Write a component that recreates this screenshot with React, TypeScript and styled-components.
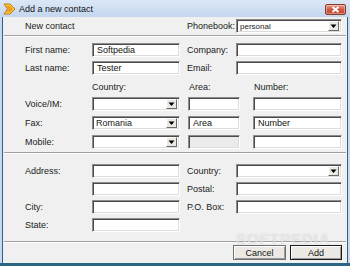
import React from 'react';
import styled, {createGlobalStyle} from 'styled-components';

const GlobalStyle = createGlobalStyle`
  * {
    box-sizing: border-box;
  }
  html, body {
    margin: 0;
    padding: 0;
    background: #ffffff;
  }
  body {
    font-family: 'Liberation Sans', Arial, sans-serif;
    font-size: 9px;
    color: #1a1a1a;
  }
`;

const Window = styled.div`
  position: relative;
  width: 350px;
  height: 266px;
  display: flex;
  flex-direction: column;
  padding: 0 2px;
  background: #c6d9f0;
  border-bottom: 3px solid #2c6484;
  overflow: hidden;
`;

const TitleBar = styled.div`
  height: 17px;
  flex: none;
  display: flex;
  align-items: center;
  gap: 3px;
  padding-left: 1px;
  margin: 0 -2px;
  padding-left: 3px;
  padding-right: 4px;
  background: linear-gradient(#dbe7f6, #c4d7ef);
`;

const Title = styled.span`
  flex: 1;
  font-size: 9px;
  color: #111;
  padding-top: 1px;
`;

const CloseButton = styled.div`
  width: 21px;
  height: 11px;
  margin-top: 1px;
  display: flex;
  align-items: center;
  justify-content: center;
  border: 1px solid #8a3a2c;
  border-radius: 2px;
  background: linear-gradient(#e9a08c, #cf5a42 50%, #c24a33);
  box-shadow: inset 0 0 0 1px rgba(255, 255, 255, 0.35);
`;

const Client = styled.div`
  flex: 1;
  display: flex;
  flex-direction: column;
  background: #f0f0f0;
  border-left: 1px solid #2c6484;
  border-right: 1px solid #2c6484;
  padding: 0 1px;
`;

const Section = styled.div<{$top: number}>`
  padding: ${p => p.$top}px 4px 0 21px;
`;

const FieldGrid = styled.div`
  display: grid;
  grid-template-columns: 67px 88px 56px 106px;
  grid-auto-rows: 14px;
  row-gap: 4px;
  align-items: center;
`;

const PhoneGrid = styled.div`
  display: grid;
  grid-template-columns: 67px 88px 8px 52px 13px 89px;
  grid-template-rows: 10px 14px 14px 14px;
  row-gap: 5px;
  align-items: center;
`;

const Separator = styled.div<{$top: number}>`
  margin-top: ${p => p.$top}px;
  height: 2px;
  border-top: 1px solid #a0a0a0;
  border-bottom: 1px solid #ffffff;
`;

const Label = styled.span<{$col?: number; $span?: number}>`
  grid-column: ${p => (p.$col ? `${p.$col} / span ${p.$span || 1}` : 'auto')};
  white-space: nowrap;
  padding-left: ${p => (p.$col === 3 ? 7 : 0)}px;
  line-height: 10px;
`;

const HeadLabel = styled.span<{$col: number}>`
  grid-column: ${p => p.$col};
  padding-left: ${p => (p.$col === 2 ? 0 : 1)}px;
  line-height: 10px;
`;

const sunken = `
  background: #ffffff;
  border-top: 1px solid #8c8c8c;
  border-left: 1px solid #8c8c8c;
  border-right: 1px solid #ffffff;
  border-bottom: 1px solid #ffffff;
  box-shadow: inset 1px 1px 0 #4a4a4a, inset -1px -1px 0 #dcdcdc;
`;

const TextBox = styled.div<{$col?: number; $disabled?: boolean}>`
  grid-column: ${p => p.$col || 'auto'};
  height: 14px;
  display: flex;
  align-items: center;
  padding-left: 4px;
  font-size: 9px;
  color: #111;
  ${sunken}
  background: ${p => (p.$disabled ? '#ebebeb' : '#ffffff')};
`;

const Combo = styled.div<{$col?: number; $small?: boolean}>`
  grid-column: ${p => p.$col || 'auto'};
  height: 14px;
  display: flex;
  align-items: center;
  padding: 2px 2px 2px 2px;
  font-size: ${p => (p.$small ? 8 : 9)}px;
  ${sunken}
`;

const ComboText = styled.span`
  flex: 1;
  padding-left: 1px;
  overflow: hidden;
  white-space: nowrap;
`;

const DropButton = styled.div`
  width: 11px;
  height: 10px;
  display: flex;
  align-items: center;
  justify-content: center;
  background: #ece9e4;
  border-top: 1px solid #ffffff;
  border-left: 1px solid #ffffff;
  border-right: 1px solid #6a6a6a;
  border-bottom: 1px solid #6a6a6a;
`;

const ButtonRow = styled.div`
  display: flex;
  justify-content: flex-end;
  gap: 4px;
  margin-top: 2px;
  padding-right: 4px;
`;

const Button = styled.div<{$default?: boolean}>`
  width: ${p => (p.$default ? 52 : 53)}px;
  height: 15px;
  display: flex;
  align-items: center;
  justify-content: center;
  font-size: 9px;
  color: #111;
  background: #ece9e4;
  border: 1px solid ${p => (p.$default ? '#1a1a1a' : '#6f6f6f')};
  box-shadow: inset 1px 1px 0 #ffffff, inset -1px -1px 0 #9a9a9a;
`;

const Watermark = styled.div`
  position: absolute;
  left: 236px;
  top: 230px;
  font-size: 15px;
  font-weight: bold;
  letter-spacing: 1px;
  color: rgba(255, 255, 255, 0.55);
  text-shadow: 0 0 1px rgba(120, 120, 120, 0.35);
  pointer-events: none;
`;

const Arrow = () => (
  <svg width="7" height="5" viewBox="0 0 7 5">
    <polygon points="0.5,0.5 6.5,0.5 3.5,4" fill="#000" />
  </svg>
);

const Select: React.FC<{col?: number; value?: string; small?: boolean}> = ({col, value, small}) => (
  <Combo $col={col} $small={small}>
    <ComboText>{value}</ComboText>
    <DropButton>
      <Arrow />
    </DropButton>
  </Combo>
);

const AppIcon = () => (
  <svg width="13" height="12" viewBox="0 0 13 12">
    <polygon points="1,1 7,1 12,6 7,11 1,11 4.5,6" fill="#f5c93a" stroke="#c57a12" strokeWidth="1" />
    <polygon points="3,3 7,3 10,6 7,9 3,9 5.5,6" fill="#f09a26" />
  </svg>
);

const App: React.FC = () => {
  return (
    <>
      <GlobalStyle />
      <Window>
        <TitleBar>
          <AppIcon />
          <Title>Add a new contact</Title>
          <CloseButton>
            <svg width="9" height="7" viewBox="0 0 9 7">
              <path d="M1.5 1 L7.5 6 M7.5 1 L1.5 6" stroke="#fff" strokeWidth="1.8" />
            </svg>
          </CloseButton>
        </TitleBar>
        <Client>
          <Section $top={2}>
            <FieldGrid>
              <Label $col={1} $span={2}>New contact</Label>
              <Label $col={3}>Phonebook:</Label>
              <Select col={4} value="personal" small />
            </FieldGrid>
          </Section>
          <Separator $top={2} />
          <Section $top={6}>
            <FieldGrid>
              <Label $col={1}>First name:</Label>
              <TextBox $col={2}>Softpedia</TextBox>
              <Label $col={3}>Company:</Label>
              <TextBox $col={4} />
              <Label $col={1}>Last name:</Label>
              <TextBox $col={2}>Tester</TextBox>
              <Label $col={3}>Email:</Label>
              <TextBox $col={4} />
            </FieldGrid>
          </Section>
          <Section $top={7}>
            <PhoneGrid>
              <HeadLabel $col={2}>Country:</HeadLabel>
              <HeadLabel $col={4}>Area:</HeadLabel>
              <HeadLabel $col={6}>Number:</HeadLabel>

              <Label $col={1}>Voice/IM:</Label>
              <Select col={2} />
              <TextBox $col={4} />
              <TextBox $col={6} />

              <Label $col={1}>Fax:</Label>
              <Select col={2} value="Romania" />
              <TextBox $col={4}>Area</TextBox>
              <TextBox $col={6}>Number</TextBox>

              <Label $col={1}>Mobile:</Label>
              <Select col={2} />
              <TextBox $col={4} $disabled />
              <TextBox $col={6} />
            </PhoneGrid>
          </Section>
          <Separator $top={3} />
          <Section $top={10}>
            <FieldGrid>
              <Label $col={1}>Address:</Label>
              <TextBox $col={2} />
              <Label $col={3}>Country:</Label>
              <Select col={4} />

              <TextBox $col={2} />
              <Label $col={3}>Postal:</Label>
              <TextBox $col={4} />

              <Label $col={1}>City:</Label>
              <TextBox $col={2} />
              <Label $col={3}>P.O. Box:</Label>
              <TextBox $col={4} />

              <Label $col={1}>State:</Label>
              <TextBox $col={2} />
            </FieldGrid>
          </Section>
          <Separator $top={9} />
          <ButtonRow>
            <Button>Cancel</Button>
            <Button $default>Add</Button>
          </ButtonRow>
        </Client>
        <Watermark>SOFTPEDIA</Watermark>
      </Window>
    </>
  );
};

export default App;
